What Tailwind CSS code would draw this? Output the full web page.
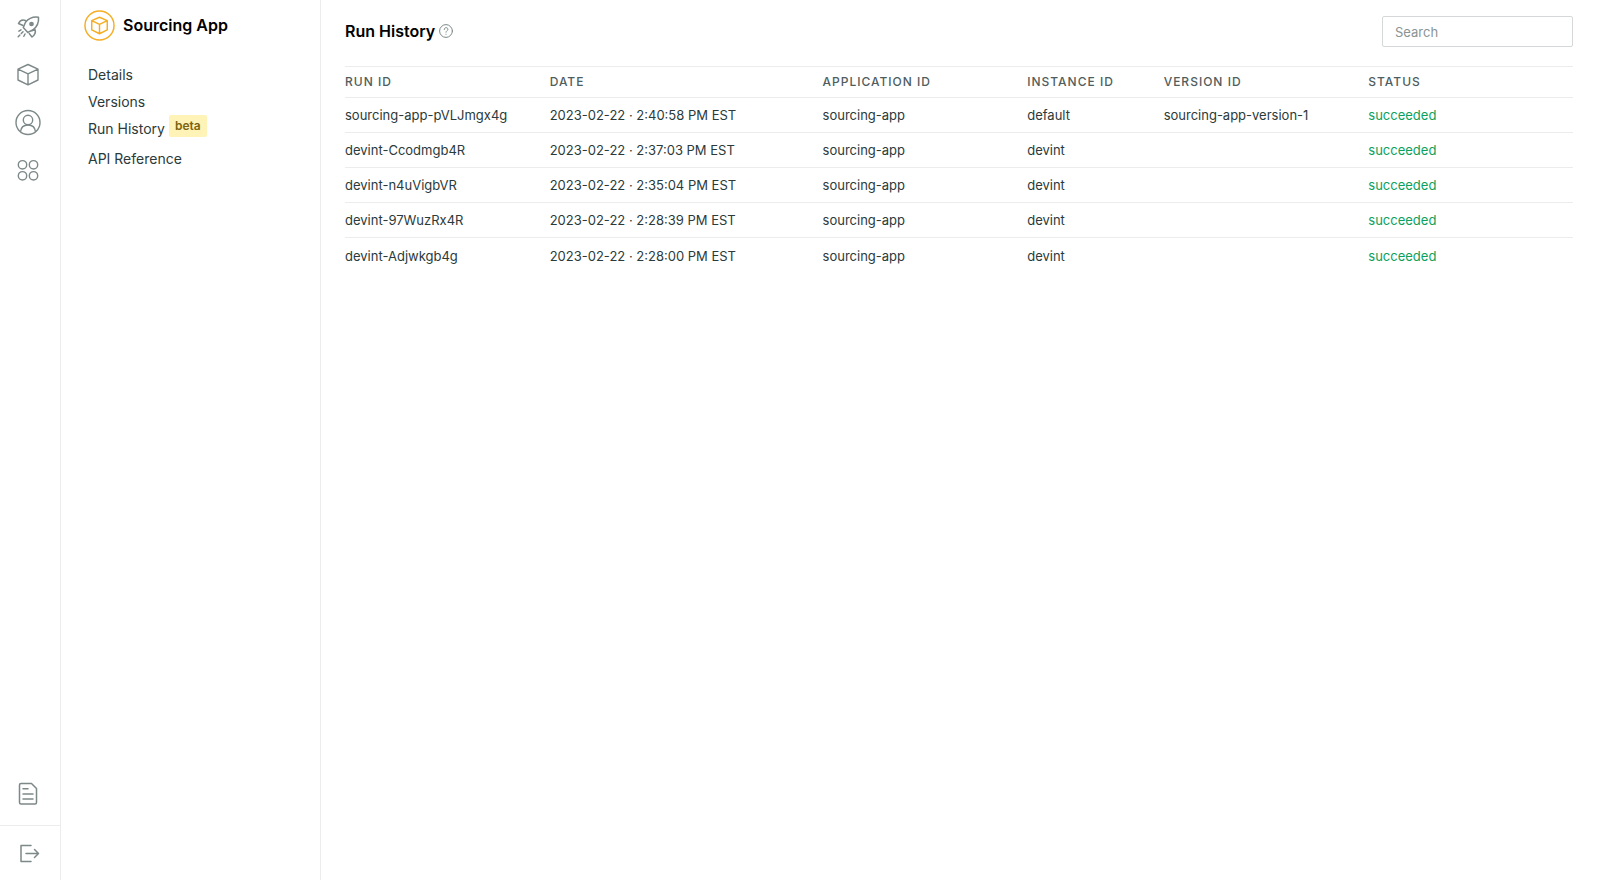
<!DOCTYPE html>
<html lang="en">
<head>
<meta charset="utf-8">
<title>Run History</title>
<script src="https://cdn.jsdelivr.net/npm/@tailwindcss/browser@4"></script>
</head>
<body class="flex min-h-screen bg-white font-['Inter',sans-serif] text-[13px] text-[#2b3a3a]">
<nav aria-label="Main" class="flex w-[61px] shrink-0 flex-col border-r border-[#ececec] text-[#7d8888]">
  <div class="flex flex-1 flex-col items-center gap-5 pt-[13px] pr-1 pb-[17px]">
    <a href="#" aria-label="Launch">
      <svg class="size-7" viewBox="0 0 28 28" fill="none" stroke="currentColor" stroke-width="1.5" stroke-linecap="round" stroke-linejoin="round">
        <path d="M24.500 4.200C19 3.500 14.500 5.500 11.500 9.300L9.300 14.500L13.800 19.400L18.700 17C23 14 25 9.500 24.500 4.200Z"/>
        <circle cx="17.500" cy="11" r="1.600" fill="currentColor"/>
        <path d="M11.500 7.500C8.500 6.300 6 7.300 4.500 10.500L9 12.500M17.800 17.800L21 16.500C22 19.500 20.800 22 18 24L15.200 20.500"/>
        <path d="M7 16.800L3.800 18.800M9 18.700L4.200 23.700M11 21L9.300 24.300" stroke-dasharray="2.500 2"/>
      </svg>
    </a>
    <a href="#" aria-label="Applications">
      <svg class="size-7" viewBox="0 0 28 28" fill="none" stroke="currentColor" stroke-width="1.400" stroke-linejoin="round"><path d="M14 3.500L24 8.200V19L14 23.800L4 19V8.200ZM4 8.200L14 12.800L24 8.200M14 12.800V23.800"/></svg>
    </a>
    <a href="#" aria-label="Account">
      <svg class="size-7" viewBox="0 0 28 28" fill="none" stroke="currentColor" stroke-width="1.400"><circle cx="14" cy="13.500" r="12"/><circle cx="14" cy="11" r="4.700"/><path d="M6.500 22.700C7 18 9.500 16 14 16S21 18 21.500 22.700"/></svg>
    </a>
    <a href="#" aria-label="Apps">
      <svg class="size-7" viewBox="0 0 28 28" fill="none" stroke="currentColor" stroke-width="1.400"><circle cx="8.500" cy="7.800" r="4.200"/><circle cx="19.500" cy="7.800" r="4.200"/><circle cx="8.500" cy="18.800" r="4.200"/><circle cx="19.500" cy="18.800" r="4.200"/></svg>
    </a>
    <a href="#" aria-label="Documentation" class="mt-auto">
      <svg class="size-7" viewBox="0 0 28 28" fill="none" stroke="currentColor" stroke-width="1.500" stroke-linecap="round" stroke-linejoin="round"><path d="M17.500 3.500H7C6 3.500 5.500 4 5.500 5V22.500C5.500 23.500 6 24 7 24H21C22 24 22.500 23.500 22.500 22.500V8.500ZM9 8.800H14M9 14H19M9 19H19"/></svg>
    </a>
  </div>
  <div class="flex h-[55px] items-center justify-center border-t border-[#ececec] pr-1">
    <button type="button" aria-label="Log out" class="size-7">
      <svg class="size-7" viewBox="0 0 28 28" fill="none" stroke="currentColor" stroke-width="1.500" stroke-linecap="round" stroke-linejoin="round"><path d="M17 6.500H7V22.500H17M12 14.500H24.500M20.500 10.500L24.500 14.500L20.500 18.500"/></svg>
    </button>
  </div>
</nav>
<aside class="w-[260px] shrink-0 border-r border-[#ececec] pl-[23px] pt-2.5">
  <div class="flex items-center gap-2">
    <svg class="size-[31px] text-[#f5ae23]" viewBox="0 0 32 32" fill="none" stroke="currentColor" stroke-width="1.500" stroke-linejoin="round"><circle cx="16" cy="16" r="15"/><path stroke-width="1.500" d="M16 7.500L24 11V20.500L16 24.500L8 20.500V11ZM8 11L16 14.800L24 11M16 14.800V24.500"/></svg>
    <span class="text-base leading-[31px] font-semibold text-black">Sourcing App</span>
  </div>
  <nav aria-label="Sourcing App" class="mt-5 pl-1 text-sm">
    <ul>
      <li class="h-[27px] leading-[27px]"><a href="#">Details</a></li>
      <li class="h-[27px] leading-[27px]"><a href="#">Versions</a></li>
      <li class="flex h-[30px] gap-1 leading-[27px]"><a href="#">Run History</a><span class="h-[22px] rounded-xs bg-[#fff3b8] px-1.5 text-xs leading-[21px] font-semibold text-[#7b6410]">beta</span></li>
      <li class="h-[27px] leading-[27px]"><a href="#">API Reference</a></li>
    </ul>
  </nav>
</aside>
<main class="min-w-0 flex-1 px-6 pt-4 pr-[27px]">
  <header class="flex h-[50px] items-start justify-between">
    <div class="flex items-center gap-1">
      <h1 class="text-base leading-[30px] font-semibold text-black">Run History</h1>
      <button type="button" aria-label="Help" class="text-[#7d8888]"><svg class="size-3.5" viewBox="0 0 14 14" fill="none" stroke="currentColor" stroke-linecap="round"><circle cx="7" cy="7" r="6.400"/><path d="M5.200 5.500C5.200 3 8.900 3 8.900 5.400C8.900 6.700 7 6.700 7 8.200M7 10.200V10.300"/></svg></button>
    </div>
    <input type="search" aria-label="Search" placeholder="Search" class="h-[31px] w-[191px] rounded-xs border border-[#d5d8d8] px-3 text-[13px] outline-none placeholder:text-[#8a9494]">
  </header>
  <table class="w-full table-fixed border-collapse text-left">
    <colgroup><col class="w-3/18"><col class="w-4/18"><col class="w-3/18"><col class="w-2/18"><col class="w-3/18"><col class="w-3/18"></colgroup>
    <thead>
      <tr class="h-[31px] border-t border-[#ececec] text-xs tracking-[1px] text-[#4f5d5d]"><th class="font-medium">RUN ID</th><th class="font-medium">DATE</th><th class="font-medium">APPLICATION ID</th><th class="font-medium">INSTANCE ID</th><th class="font-medium">VERSION ID</th><th class="font-medium">STATUS</th></tr>
    </thead>
    <tbody class="[&_td]:pt-0.5">
      <tr class="h-[35px] border-t border-[#ececec]"><td>sourcing-app-pVLJmgx4g</td><td>2023-02-22 · 2:40:58 PM EST</td><td>sourcing-app</td><td>default</td><td>sourcing-app-version-1</td><td class="text-[#0ba15d]">succeeded</td></tr>
      <tr class="h-[35px] border-t border-[#ececec]"><td>devint-Ccodmgb4R</td><td>2023-02-22 · 2:37:03 PM EST</td><td>sourcing-app</td><td>devint</td><td></td><td class="text-[#0ba15d]">succeeded</td></tr>
      <tr class="h-[35px] border-t border-[#ececec]"><td>devint-n4uVigbVR</td><td>2023-02-22 · 2:35:04 PM EST</td><td>sourcing-app</td><td>devint</td><td></td><td class="text-[#0ba15d]">succeeded</td></tr>
      <tr class="h-[35px] border-t border-[#ececec]"><td>devint-97WuzRx4R</td><td>2023-02-22 · 2:28:39 PM EST</td><td>sourcing-app</td><td>devint</td><td></td><td class="text-[#0ba15d]">succeeded</td></tr>
      <tr class="h-[35px] border-t border-[#ececec]"><td>devint-Adjwkgb4g</td><td>2023-02-22 · 2:28:00 PM EST</td><td>sourcing-app</td><td>devint</td><td></td><td class="text-[#0ba15d]">succeeded</td></tr>
    </tbody>
  </table>
</main>
</body>
</html>
